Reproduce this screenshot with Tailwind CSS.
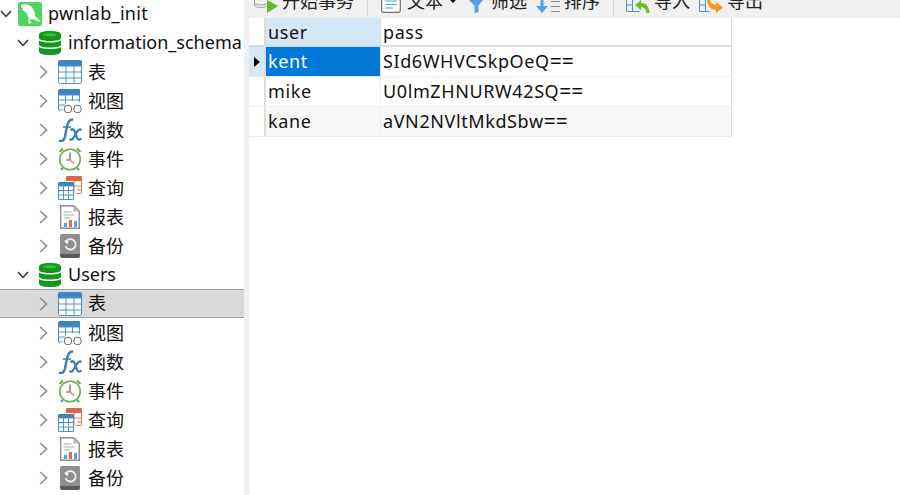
<!DOCTYPE html>
<html lang="zh">

<head>
  <meta charset="UTF-8" />
  <title>pwnlab_init</title>
  <script src="https://cdn.jsdelivr.net/npm/@tailwindcss/browser@4"></script>
</head>

<body class="w-[900px] h-[495px] overflow-hidden bg-white text-black font-['Noto_Sans','Noto_Sans_CJK_SC',sans-serif] text-[18px]">
  <!-- icon sprites -->
  <svg class="hidden">
    <symbol id="chev-r" viewBox="0 0 9 14"><path d="M1.200 1l6.300 6-6.300 6" fill="none" stroke="#8f8f8f" stroke-width="1.700"/></symbol>
    <symbol id="chev-d" viewBox="0 0 12 8"><path d="M1 1l5 5.500L11 1" fill="none" stroke="#333" stroke-width="1.500"/></symbol>
    <symbol id="db" viewBox="0 0 22 24">
      <path d="M0 4c0-3 4-4 11-4s11 1 11 4v3c0 2-4 3-11 3S0 9 0 7z" fill="#12991a"/>
      <ellipse cx="11" cy="3.800" rx="7" ry="1.500" fill="#3cc044"/>
      <path d="M0 9.500c2 1.500 6 2 11 2s9-.5 11-2v4c0 2-4 3-11 3S0 15.500 0 13.500z" fill="#12991a"/>
      <path d="M0 16c2 1.500 6 2 11 2s9-.5 11-2v4c0 3-4 4-11 4S0 23 0 20z" fill="#12991a"/>
    </symbol>
    <symbol id="tbl" viewBox="0 0 24 24">
      <path d="M2 0h20a2 2 0 0 1 2 2v5H0V2a2 2 0 0 1 2-2z" fill="#3d85c0"/>
      <path d="M.5 6h23v15.500a2 2 0 0 1-2 2h-19a2 2 0 0 1-2-2zM8 6v18M16 6v18M0 12h24M0 18h24" fill="#fff" stroke="#4b94cf"/>
    </symbol>
    <symbol id="view" viewBox="0 0 24 24">
      <path d="M2 0h19a1 1 0 0 1 1 1v5H0V2a2 2 0 0 1 2-2z" fill="#3d85c0"/>
      <path d="M.5 6v15h4M21.500 6v7M.5 6h21M7.500 6v9M14.500 6v6M1 11h20M1 16h6" fill="none" stroke="#4b94cf"/>
      <circle cx="10" cy="20" r="3.800" fill="#fff" stroke="#666"/>
      <circle cx="19.500" cy="20" r="3.800" fill="#fff" stroke="#666"/>
    </symbol>
    <symbol id="fx" viewBox="0 0 24 24">
      <path d="M1 22.500c3 1.500 5 0 6-4l2.200-11c1-4 3-6.500 6-6" fill="none" stroke="#3d7fb5" stroke-width="2.400"/>
      <path d="M5 9h8" stroke="#3d7fb5" stroke-width="1.600"/>
      <path d="M12.500 12c3-2 4 0 5 4l1.500 4c1 2 3 2 4.500 .5M23.500 12c-2-1.500-3.500 0-5.500 3.500l-3 5c-1 1.500-2.500 1.500-3.500 .5" fill="none" stroke="#3d7fb5" stroke-width="2.300"/>
    </symbol>
    <symbol id="clock" viewBox="0 0 24 24">
      <circle cx="12" cy="12.500" r="10.300" fill="#fff" stroke="#6aa84f" stroke-width="1.500"/>
      <path d="M1.500 5L5 1.500M22.500 5L19 1.500" stroke="#6aa84f" stroke-width="2"/>
      <path d="M3 23l2-2M21 23l-2-2" stroke="#888" stroke-width="2"/>
      <path d="M12 5.500v7.500H8" fill="none" stroke="#555" stroke-width="1.100"/>
      <path d="M12 13l4 3.500" stroke="#ee7d72" stroke-width="1.500"/>
    </symbol>
    <symbol id="query" viewBox="0 0 24 24">
      <path d="M8 0h16v17.500H8z" fill="#fff"/>
      <path d="M9 0h14a1 1 0 0 1 1 1v4H8V1a1 1 0 0 1 1-1z" fill="#dc6645"/>
      <path d="M23.500 5v12.500H18M16 5v12M10 10h13.500M19 14h4.500" fill="none" stroke="#e07a5f"/>
      <path d="M1 6h14a1 1 0 0 1 1 1v4H0V7a1 1 0 0 1 1-1z" fill="#3d85c0"/>
      <path d="M.5 10h15v13.500H.5zM5.500 10v14M10.500 10v14M0 14.500h16M0 19h16" fill="#fff" stroke="#4b94cf"/>
    </symbol>
    <symbol id="report" viewBox="0 0 20 24">
      <path d="M.7.7h13l5.600 5.600v17H.7z" fill="#fff" stroke="#8c8c8c" stroke-width="1.400"/>
      <path d="M13.500 1v5.500h5.500z" fill="#b8b8b8"/>
      <path d="M3.500 7h8M3.500 10h11M3.500 13h6" stroke="#aaa"/>
      <path d="M4 18h3v4H4z" fill="#4da3e8"/>
      <path d="M9 15h3v7H9z" fill="#e8694a"/>
      <path d="M14 16h3v6h-3z" fill="#4da3e8"/>
    </symbol>
    <symbol id="backup" viewBox="0 0 20 24">
      <rect width="20" height="24" rx="2.500" fill="#5a5a5a"/>
      <path d="M2.500 0h15A2.500 2.500 0 0 1 20 2.500V20H0V2.500A2.500 2.500 0 0 1 2.500 0z" fill="#8f8f8f"/>
      <path d="M6 7.500a5.200 5.200 0 1 1-.5 4.500" fill="none" stroke="#f2f2f2" stroke-width="1.800"/>
      <path d="M3.500 6.500l5 .5-1 3.500z" fill="#f2f2f2"/>
    </symbol>
    <symbol id="dolphin" viewBox="0 0 24 24">
      <rect width="24" height="24" rx="2" fill="#4fd45c"/>
      <path d="M3 3c5-2 10 0 12 4 2 3 2 5 2 7 2 2 4 3 6 6-3-1-5-1-8-3-2 1-4 0-5-2 0-3-3-6-6-7l1-2-2-1z" fill="#fff"/>
      <path d="M11 16c0 2 1 3 3 5l-3 .5c-1-2-1-4 0-5.500z" fill="#fff"/>
    </symbol>
    <!-- toolbar icons -->
    <symbol id="t-begin" viewBox="0 0 24 13">
      <path d="M.5 0v5c0 1.500 3 2.500 6 2.500s5-.5 6-1.500M.5 3c1 1.500 4 2 6 2s5-.5 6-1.500" fill="none" stroke="#9a9a9a"/>
      <path d="M13 0l11 6-11 7z" fill="#5dbb2c"/>
    </symbol>
    <symbol id="t-text" viewBox="0 0 20 13">
      <path d="M.7 0v10.500a1.800 1.800 0 0 0 1.800 1.800h15a1.800 1.800 0 0 0 1.800-1.800V0" fill="#fff" stroke="#707070" stroke-width="1.200"/>
      <path d="M4 1h12M4 4.500h12M4 8h8" stroke="#4da3e8"/>
    </symbol>
    <symbol id="t-filter" viewBox="0 0 14 13">
      <path d="M0 0h14L9.500 5.500V12l-4 1V5.500z" fill="#4da3e8"/>
    </symbol>
    <symbol id="t-sort" viewBox="0 0 24 13">
      <path d="M4.500 0h3v6H12l-6 7-6-7h4.500z" fill="#4da3e8"/>
      <path d="M15 1.500h9M15 6.500h9M15 11.500h9" stroke="#8a8a8a"/>
    </symbol>
    <symbol id="t-import" viewBox="0 0 24 13">
      <path d="M.5 0v11.500h13M6.500 0v11.500M.5 5h6" fill="none" stroke="#4b94cf"/>
      <path d="M9 5l6-5v3c5 0 8 3 8.500 10h-3c-.5-4-2.500-6-5.500-6v3z" fill="#6cbf26"/>
    </symbol>
    <symbol id="t-export" viewBox="0 0 24 13">
      <path d="M.5 0v11.500h10M6.500 0v11.500M.5 5h6" fill="none" stroke="#4b94cf"/>
      <path d="M8 0h3c.5 3 2 4.500 6 4.500V2l7 5.500-7 5.500v-3C12 10 8.500 6 8 0z" fill="#f7981d"/>
    </symbol>
  </svg>

  <div class="flex h-[495px]">
    <!-- sidebar tree -->
    <aside class="w-[244px] shrink-0 -mt-px text-[#111]">
      <div class="h-[29px] pt-px flex items-center">
        <svg class="w-3 h-2 ml-0"><use href="#chev-d"/></svg>
        <svg class="w-6 h-6 ml-[6px]"><use href="#dolphin"/></svg>
        <span class="ml-[6px] -mt-px tracking-[0.3px]">pwnlab_init</span>
      </div>
      <div class="h-[29px] pt-px flex items-center">
        <svg class="w-3 h-2 ml-[17px]"><use href="#chev-d"/></svg>
        <svg class="w-[22px] h-6 ml-[10px]"><use href="#db"/></svg>
        <span class="ml-[7px] -mt-px whitespace-nowrap">information_schema</span>
      </div>
      <div class="h-[29px] pt-px flex items-center">
        <svg class="w-[9px] h-[14px] ml-[39px]"><use href="#chev-r"/></svg>
        <svg class="w-6 h-6 ml-[10px]"><use href="#tbl"/></svg>
        <span class="ml-[6px]">表</span>
      </div>
      <div class="h-[29px] pt-px flex items-center">
        <svg class="w-[9px] h-[14px] ml-[39px]"><use href="#chev-r"/></svg>
        <svg class="w-6 h-6 ml-[10px]"><use href="#view"/></svg>
        <span class="ml-[6px]">视图</span>
      </div>
      <div class="h-[29px] pt-px flex items-center">
        <svg class="w-[9px] h-[14px] ml-[39px]"><use href="#chev-r"/></svg>
        <svg class="w-6 h-6 ml-[10px]"><use href="#fx"/></svg>
        <span class="ml-[6px]">函数</span>
      </div>
      <div class="h-[29px] pt-px flex items-center">
        <svg class="w-[9px] h-[14px] ml-[39px]"><use href="#chev-r"/></svg>
        <svg class="w-6 h-6 ml-[10px]"><use href="#clock"/></svg>
        <span class="ml-[6px]">事件</span>
      </div>
      <div class="h-[29px] pt-px flex items-center">
        <svg class="w-[9px] h-[14px] ml-[39px]"><use href="#chev-r"/></svg>
        <svg class="w-6 h-6 ml-[10px]"><use href="#query"/></svg>
        <span class="ml-[6px]">查询</span>
      </div>
      <div class="h-[29px] pt-px flex items-center">
        <svg class="w-[9px] h-[14px] ml-[39px]"><use href="#chev-r"/></svg>
        <svg class="w-[20px] h-6 ml-[12px] mr-[2px]"><use href="#report"/></svg>
        <span class="ml-[6px]">报表</span>
      </div>
      <div class="h-[29px] pt-px flex items-center">
        <svg class="w-[9px] h-[14px] ml-[39px]"><use href="#chev-r"/></svg>
        <svg class="w-[20px] h-6 ml-[12px] mr-[2px]"><use href="#backup"/></svg>
        <span class="ml-[6px]">备份</span>
      </div>
      <div class="h-[29px] pt-px flex items-center">
        <svg class="w-3 h-2 ml-[17px]"><use href="#chev-d"/></svg>
        <svg class="w-[22px] h-6 ml-[10px]"><use href="#db"/></svg>
        <span class="ml-[7px] -mt-px">Users</span>
      </div>
      <div class="h-[29px] flex items-center bg-[#d9d9d9] border-y border-[#a0a0a0]">
        <svg class="w-[9px] h-[14px] ml-[39px]"><use href="#chev-r"/></svg>
        <svg class="w-6 h-6 ml-[10px]"><use href="#tbl"/></svg>
        <span class="ml-[6px]">表</span>
      </div>
      <div class="h-[29px] pt-px flex items-center">
        <svg class="w-[9px] h-[14px] ml-[39px]"><use href="#chev-r"/></svg>
        <svg class="w-6 h-6 ml-[10px]"><use href="#view"/></svg>
        <span class="ml-[6px]">视图</span>
      </div>
      <div class="h-[29px] pt-px flex items-center">
        <svg class="w-[9px] h-[14px] ml-[39px]"><use href="#chev-r"/></svg>
        <svg class="w-6 h-6 ml-[10px]"><use href="#fx"/></svg>
        <span class="ml-[6px]">函数</span>
      </div>
      <div class="h-[29px] pt-px flex items-center">
        <svg class="w-[9px] h-[14px] ml-[39px]"><use href="#chev-r"/></svg>
        <svg class="w-6 h-6 ml-[10px]"><use href="#clock"/></svg>
        <span class="ml-[6px]">事件</span>
      </div>
      <div class="h-[29px] pt-px flex items-center">
        <svg class="w-[9px] h-[14px] ml-[39px]"><use href="#chev-r"/></svg>
        <svg class="w-6 h-6 ml-[10px]"><use href="#query"/></svg>
        <span class="ml-[6px]">查询</span>
      </div>
      <div class="h-[29px] pt-px flex items-center">
        <svg class="w-[9px] h-[14px] ml-[39px]"><use href="#chev-r"/></svg>
        <svg class="w-[20px] h-6 ml-[12px] mr-[2px]"><use href="#report"/></svg>
        <span class="ml-[6px]">报表</span>
      </div>
      <div class="h-[29px] pt-px flex items-center">
        <svg class="w-[9px] h-[14px] ml-[39px]"><use href="#chev-r"/></svg>
        <svg class="w-[20px] h-6 ml-[12px] mr-[2px]"><use href="#backup"/></svg>
        <span class="ml-[6px]">备份</span>
      </div>
    </aside>

    <!-- splitter -->
    <div class="w-[5px] shrink-0 bg-[#f0f0f0]"></div>

    <main class="flex-1 min-w-0">
      <!-- toolbar, cut off by the window top -->
      <div class="h-[18px] bg-[#f0f0f0] overflow-hidden flex items-start whitespace-nowrap text-[#222]">
        <svg class="w-6 h-[13px] ml-[5px] shrink-0"><use href="#t-begin"/></svg>
        <span class="ml-1 w-[72px] -mt-[11px] leading-6 shrink-0">开始事务</span>
        <div class="ml-[13px] w-px h-4 bg-[#d4d4d4] shrink-0"></div>
        <svg class="w-5 h-[13px] ml-[13px] shrink-0"><use href="#t-text"/></svg>
        <span class="ml-[6px] w-9 -mt-[11px] leading-6 shrink-0">文本</span>
        <svg class="w-[6px] h-[3px] ml-[7px] shrink-0" viewBox="0 0 6 3"><path d="M0 0h6L3 3z" fill="#111"/></svg>
        <svg class="w-[14px] h-[13px] ml-[13px] shrink-0"><use href="#t-filter"/></svg>
        <span class="ml-2 w-9 -mt-[11px] leading-6 shrink-0">筛选</span>
        <svg class="w-6 h-[13px] ml-[9px] shrink-0"><use href="#t-sort"/></svg>
        <span class="ml-1 w-9 -mt-[11px] leading-6 shrink-0">排序</span>
        <div class="ml-[13px] w-px h-4 bg-[#d4d4d4] shrink-0"></div>
        <svg class="w-6 h-[13px] ml-3 shrink-0"><use href="#t-import"/></svg>
        <span class="ml-1 w-9 -mt-[11px] leading-6 shrink-0">导入</span>
        <svg class="w-6 h-[13px] ml-[9px] shrink-0"><use href="#t-export"/></svg>
        <span class="ml-1 w-9 -mt-[11px] leading-6 shrink-0">导出</span>
      </div>
      <!-- result grid -->
      <div class="w-[483px] tracking-[0.6px] text-[#111]">
        <div class="flex h-[29px] border-b-2 border-[#dcdcdc]">
          <div class="w-[17px] border-r-2 border-[#dcdcdc]"></div>
          <div class="w-[115px] bg-[#d6e7f7] border-r border-[#dcdcdc] px-[2px] pt-px flex items-center">user</div>
          <div class="flex-1 border-r border-[#dcdcdc] px-[2px] pt-px flex items-center">pass</div>
        </div>
        <div class="flex h-[30px] border-b border-[#ececec]">
          <div class="w-[17px] border-r-2 border-[#dcdcdc] bg-[#d6e7f7] flex items-center justify-center">
            <svg class="w-[6px] h-[10px]" viewBox="0 0 6 10"><path d="M0 0l6 5-6 5z" fill="#000"/></svg>
          </div>
          <div class="w-[115px] bg-[#0078d7] text-white border-r border-[#ececec] px-[2px] flex items-center">kent</div>
          <div class="flex-1 border-r border-[#dcdcdc] px-[2px] flex items-center whitespace-pre">SId6WHVCSkpOeQ<span class="text-[21px] tracking-normal">==</span></div>
        </div>
        <div class="flex h-[30px] border-b border-[#ececec]">
          <div class="w-[17px] border-r-2 border-[#dcdcdc]"></div>
          <div class="w-[115px] border-r border-[#ececec] px-[2px] flex items-center">mike</div>
          <div class="flex-1 border-r border-[#dcdcdc] px-[2px] flex items-center whitespace-pre">U0lmZHNURW42SQ<span class="text-[21px] tracking-normal">==</span></div>
        </div>
        <div class="flex h-[30px] border-b border-[#ececec]">
          <div class="w-[17px] border-r-2 border-[#dcdcdc]"></div>
          <div class="w-[115px] bg-[#f7f7f7] border-r border-[#ececec] px-[2px] flex items-center">kane</div>
          <div class="flex-1 bg-[#f7f7f7] border-r border-[#dcdcdc] px-[2px] flex items-center whitespace-pre">aVN2NVltMkdSbw<span class="text-[21px] tracking-normal">==</span></div>
        </div>
      </div>
    </main>
  </div>
</body>

</html>
